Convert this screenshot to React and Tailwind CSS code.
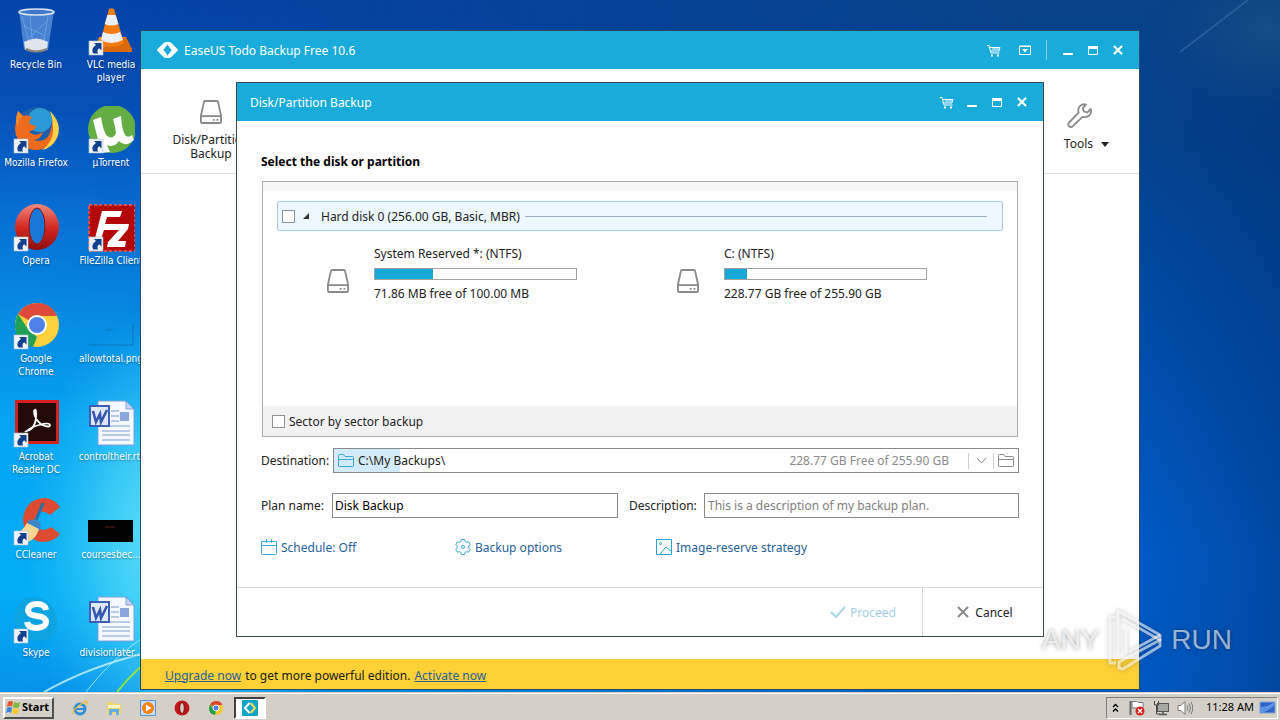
import { useState } from 'react'

const Wallpaper = () => (
  <svg
    className="absolute inset-0 w-full h-full"
    viewBox="0 0 1280 692"
    preserveAspectRatio="none"
    aria-hidden="true"
  >
    <defs>
      <linearGradient id="wallLeft" x1="0.1" y1="0" x2="0" y2="1">
        <stop offset="0" stopColor="#0443a8" />
        <stop offset="0.16" stopColor="#0650b6" />
        <stop offset="0.3" stopColor="#066cd2" />
        <stop offset="0.45" stopColor="#0689e2" />
        <stop offset="0.62" stopColor="#05a4f2" />
        <stop offset="0.85" stopColor="#02aef6" />
        <stop offset="1" stopColor="#0692ea" />
      </linearGradient>
      <linearGradient id="wallRight" x1="0" y1="0" x2="0" y2="1">
        <stop offset="0" stopColor="#084389" />
        <stop offset="0.2" stopColor="#04418c" />
        <stop offset="0.45" stopColor="#004ba6" />
        <stop offset="0.8" stopColor="#005ac6" />
        <stop offset="1" stopColor="#0058c2" />
      </linearGradient>
      <linearGradient id="wallFade" x1="0" y1="0" x2="1" y2="0">
        <stop offset="0.1" stopColor="#fff" stopOpacity="0" />
        <stop offset="0.8" stopColor="#fff" />
      </linearGradient>
      <linearGradient id="wallEdge" x1="0" y1="0" x2="1" y2="0">
        <stop offset="0" stopColor="#003070" stopOpacity="0" />
        <stop offset="1" stopColor="#003070" stopOpacity="0.4" />
      </linearGradient>
      <radialGradient id="wallGlow">
        <stop offset="0" stopColor="#7cecfa" />
        <stop offset="0.5" stopColor="#4fd8f6" stopOpacity="0.7" />
        <stop offset="1" stopColor="#28bef5" stopOpacity="0" />
      </radialGradient>
      <radialGradient id="wallHaze">
        <stop offset="0" stopColor="#1c5488" stopOpacity="0.7" />
        <stop offset="1" stopColor="#1c5488" stopOpacity="0" />
      </radialGradient>
      <mask id="wallMask">
        <rect width="1280" height="692" fill="url(#wallFade)" />
      </mask>
    </defs>
    <rect width="1280" height="692" fill="url(#wallLeft)" />
    <rect width="1280" height="692" fill="url(#wallRight)" mask="url(#wallMask)" />
    <rect x="1140" width="140" height="692" fill="url(#wallEdge)" />
    <ellipse cx="1270" cy="30" rx="110" ry="80" fill="url(#wallHaze)" />
    <ellipse cx="190" cy="540" rx="170" ry="240" fill="url(#wallGlow)" />
    <path d="M44 692Q90 666 150 652" stroke="#c8f4ff" strokeWidth="2" fill="none" opacity="0.8" />
    <path d="M86 692Q110 660 150 632" stroke="#b0f0f8" strokeWidth="1" fill="none" opacity="0.8" />
    <path d="M117 692Q128 678 146 662" stroke="#8ee04a" strokeWidth="2" fill="none" />
    <path d="M1180 52L1248 0" stroke="#5f8fc4" strokeWidth="2" fill="none" opacity="0.3" />
  </svg>
)

const ShortcutArrow = () => (
  <g>
    <rect x="2" y="33" width="14" height="14" fill="#eef2f7" stroke="#b6c2d0" strokeWidth="0.6" />
    <path d="M7 35h7.500v7.500l-2.300-2.300c-1.700 1.300-2.200 2.900-1.200 5.300H6.500c-2-3-1.200-6 2.500-8.500z" fill="#12408c" />
  </g>
)

const RecycleBinIcon = () => (
  <>
    <path d="M7 3L12 42Q24 47 36 42L42 3Z" fill="#5d96dc" opacity="0.75" />
    <path d="M10 8l8 30M18 8l3 32M36 8l-5 30M12 18l20 9M34 14L16 31" stroke="#9cc8f5" strokeWidth="1" opacity="0.4" />
    <path d="M12 34q12-7 24 0l-1 7q-11 6-22 0z" fill="#dfe5ea" />
    <path d="M14 41q10 5 21 0" stroke="#8a8176" strokeWidth="2" fill="none" />
    <ellipse cx="24.5" cy="4" rx="17.5" ry="3" fill="#3f78c8" stroke="#d6e2ee" strokeWidth="1.6" />
  </>
)

const VlcIcon = () => (
  <>
    <path d="M12 29h27l6 15H7z" fill="#f18a14" />
    <path d="M7 44h38v-3L39 29z" fill="#d9690a" />
    <path d="M22 1q2.5-1.500 5 0l10 34q-12 8-24 0z" fill="#f07c12" />
    <path d="M20.400 7h8.300l2.700 9q-6.800 3-13.700 0zM16 24q9 4 17 0l3 8q-12 6-22 0z" fill="#eceff1" />
  </>
)

const FirefoxIcon = () => (
  <>
    <circle cx="25" cy="22" r="21" fill="#1c5fa8" />
    <circle cx="28" cy="14" r="12" fill="#2c9ad6" />
    <path d="M44 13q5 16-5 25-14 11-28 2Q-1 28 5 14L6 5l5 5q6-2 9 2-4 3-2 6l6 2q-1 5-7 5 5 7 14 1-2 7-9 8 14 4 17-11 2-8 1-14z" fill="#ee6a1c" />
    <path d="M38 5q13 13 7 27-5 10-15 12 12-9 11-22 0-9-3-17z" fill="#fbd04a" />
    <path d="M6 5l5 5q-6 5-5 12-4-8 0-17z" fill="#f58a28" />
  </>
)

const UtorrentIcon = () => (
  <>
    <circle cx="25" cy="23" r="24" fill="#64ad43" />
    <path d="M6 14l8-3q2 14 6 19 6 4 9-3-1-8-3-14l8-3q1 16 5 20 3 2 6-1l2 5q-9 8-15 1-5 7-12 4l3 7-8 1Q10 31 6 14z" fill="#fff" />
  </>
)

const OperaIcon = () => (
  <>
    <defs>
      <linearGradient id="operaRed" x1="0" y1="0" x2="0" y2="1">
        <stop offset="0" stopColor="#f08a7c" />
        <stop offset="0.5" stopColor="#d42a22" />
        <stop offset="1" stopColor="#8e0c0c" />
      </linearGradient>
    </defs>
    <ellipse cx="25" cy="23" rx="22" ry="23" fill="url(#operaRed)" />
    <ellipse cx="25" cy="22" rx="8" ry="18" fill="#1878d8" stroke="#8e1414" />
  </>
)

const FilezillaIcon = () => (
  <>
    <rect x="2" y="1" width="46" height="46" fill="#b40808" stroke="#e05050" strokeWidth="2" strokeDasharray="3 2" />
    <path d="M15 7h20l-2 6H20l-2 7h11l-2 6H17l-4 12H7z" fill="#fff" />
    <path d="M25 20h17l-1 5-10 12h8l-1 6H20l1-5 11-12h-8z" fill="#fff" />
  </>
)

const ChromeIcon = () => (
  <>
    <circle cx="25" cy="23" r="22" fill="#fdd13c" />
    <path d="M25 23L6 12Q13 1 25 1q14 0 20 13H25z" fill="#dd4a3a" />
    <path d="M6 12L16 27l9 8-4 10Q3 40 3 23q0-6 3-11z" fill="#20a056" />
    <circle cx="25" cy="23" r="10" fill="#fff" />
    <circle cx="25" cy="23" r="8" fill="#4c82e8" />
  </>
)

const AcrobatIcon = () => (
  <>
    <rect x="3" y="0" width="44" height="44" fill="#d3231c" />
    <rect x="6" y="3" width="38" height="38" fill="#250a0a" />
    <path d="M15 31q10-3 9-19 0-4-2-1 0 8 8 14 8 3 8 0-1-3-11 0-8 2-12 6-3 1 0 0z" stroke="#fff" strokeWidth="1.800" fill="none" />
  </>
)

const CcleanerIcon = () => (
  <>
    <path d="M48 9Q42 0 31 0 13 2 11 21q1 21 19 23 12 0 18-8l-9-7q-8 6-14 0-5-8 1-14 6-4 12 2z" fill="#dc4a30" />
    <path d="M31 5L23 25" stroke="#2870b0" strokeWidth="3" />
    <path d="M16 23q8-4 13 3l-1 7-13-5z" fill="#3c86c8" />
    <path d="M15 25l12 6q-3 10-11 13Q8 44 2 37q8-3 13-12z" fill="#f6d692" />
  </>
)

const SkypeIcon = () => (
  <>
    <path d="M14 2q22-5 30 16 5 26-14 27-24 2-28-19Q2 8 14 2z" fill="#0ea2dc" opacity="0.8" />
    <path d="M34 14q-1-6-9-6t-9 6q0 5 9 6 9 1 9 6t-9 6q-9 0-10-6" stroke="#fff" strokeWidth="6" fill="none" />
  </>
)

const WordIcon = () => (
  <>
    <path d="M11 1h28l8 8v36H11z" fill="#f4f8ff" stroke="#7f9ed8" />
    <path d="M39 1v8h8z" fill="#c4d4f2" stroke="#6a8ac8" strokeWidth="0.7" />
    <path d="M24 11h8M24 16h8M24 21h8M15 26h28M15 31h28M15 35h28M15 40h28" stroke="#7f9ad0" />
    <rect x="33" y="12" width="9" height="9" fill="#8aa6da" />
    <rect x="3" y="6" width="19" height="20" fill="#dfe8fa" stroke="#3c60b8" strokeWidth="2" />
    <path d="M6 11l3 11 4-8 1 8 6-12" stroke="#3458b0" strokeWidth="2.6" fill="none" />
  </>
)

const DarkThumbIcon = () => (
  <>
    <rect x="1" y="22" width="45" height="22" fill="#000" />
    <path d="M18 29h10" stroke="#5c1a1a" />
  </>
)

const ClearThumbIcon = () => (
  <path d="M2 43h44V22M19 28h7" stroke="#0c72bc" strokeWidth="1" fill="none" />
)

const shortcuts = [
  { label: 'Recycle Bin', Icon: RecycleBinIcon },
  { label: 'VLC media player', Icon: VlcIcon, linked: true, wrap: true },
  { label: 'Mozilla Firefox', Icon: FirefoxIcon, linked: true },
  { label: 'µTorrent', Icon: UtorrentIcon, linked: true },
  { label: 'Opera', Icon: OperaIcon, linked: true },
  { label: 'FileZilla Client', Icon: FilezillaIcon, linked: true },
  { label: 'Google Chrome', Icon: ChromeIcon, linked: true, wrap: true },
  { label: 'allowtotal.png', Icon: ClearThumbIcon },
  { label: 'Acrobat Reader DC', Icon: AcrobatIcon, linked: true, wrap: true },
  { label: 'controltheir.rtf', Icon: WordIcon },
  { label: 'CCleaner', Icon: CcleanerIcon, linked: true },
  { label: 'coursesbec...', Icon: DarkThumbIcon },
  { label: 'Skype', Icon: SkypeIcon, linked: true },
  { label: 'divisionlater...', Icon: WordIcon },
]

const DesktopIcons = () => (
  <div className="relative grid w-fit auto-rows-[98px] grid-cols-[72px_78px] font-['DejaVu_Sans_Condensed','DejaVu_Sans',sans-serif]">
    {shortcuts.map(({ label, Icon, linked, wrap }) => (
      <div key={label} className="flex flex-col items-center pt-2">
        <svg width="48" height="48" viewBox="0 0 48 48" fill="none" aria-hidden="true">
          <Icon />
          {linked && <ShortcutArrow />}
        </svg>
        <span
          className={`mt-0.5 text-center text-[10px] leading-[13px] text-white [text-shadow:0_1px_2px_#00204080] ${
            wrap ? 'w-16' : 'whitespace-nowrap'
          }`}
        >
          {label}
        </span>
      </div>
    ))}
  </div>
)

const DiskIcon = () => (
  <svg width="22" height="26" viewBox="0 0 24 28" fill="none" stroke="#8a8a8a" strokeWidth="2" aria-hidden="true">
    <path d="M5.5 2h13q1 0 1.200 1L23 18v6.500q0 1.500-1.500 1.500h-19Q1 26 1 24.500V18L4.300 3q.2-1 1.200-1z" />
    <path d="M1 18.500h22" />
    <path d="M14 22.500h2M18 22.500h2" />
  </svg>
)

const CartIcon = () => (
  <svg width="14" height="13" viewBox="0 0 14 13" fill="none" stroke="#fff" aria-hidden="true">
    <path d="M0 1.500h2l2 7.500h8.500M3 3.500h10L12 7H4M5 5h7" />
    <path d="M4 11.500h2M10 11.500h2" strokeWidth="2" />
  </svg>
)

const DropBoxIcon = () => (
  <svg width="12" height="10" viewBox="0 0 12 10" fill="none" stroke="#fff" aria-hidden="true">
    <path d="M.5 1h11v8.500H.5zM0 1.500h12" />
    <path d="M3 4h6L6 7.500z" fill="#fff" stroke="none" />
  </svg>
)

const MinimizeIcon = () => (
  <svg width="10" height="10" viewBox="0 0 10 10" aria-hidden="true">
    <path d="M0 8h10v2H0z" fill="#fff" />
  </svg>
)

const MaximizeIcon = () => (
  <svg width="10" height="9" viewBox="0 0 10 9" fill="none" stroke="#fff" aria-hidden="true">
    <path d="M.5.5h9v8h-9z" />
    <path d="M0 1.500h10" strokeWidth="3" />
  </svg>
)

const CloseIcon = () => (
  <svg width="10" height="10" viewBox="0 0 10 10" stroke="#fff" strokeWidth="2.2" aria-hidden="true">
    <path d="M1 1l8 8M9 1L1 9" />
  </svg>
)

const WindowButton = ({ label, children }) => (
  <button type="button" aria-label={label} className="flex h-6 w-[25px] items-center justify-center">
    {children}
  </button>
)

const FolderIcon = ({ color }) => (
  <svg width="16" height="13" viewBox="0 0 16 13" fill="none" stroke={color} aria-hidden="true">
    <path d="M.5 12V1.500q0-1 1-1h4l1.500 2h7.500q1 0 1 1V12q0 .5-1 .5h-13q-1 0-1-.5zM.5 5.500h15" />
  </svg>
)

const Partition = ({ name, space, used }) => (
  <div className="flex w-[350px] shrink-0 items-end">
    <div className="pb-2">
      <DiskIcon />
    </div>
    <div className="ml-[25px] flex w-[203px] flex-col">
      <span className="leading-4">{name}</span>
      <div className="my-[6px] h-3 border border-[#a0a0a0] bg-white">
        <div className="h-full bg-[#16a9d8]" style={{ width: `${used}%` }} />
      </div>
      <span className="leading-4 whitespace-nowrap">{space}</span>
    </div>
  </div>
)

const BackupDialog = () => {
  const [destination, setDestination] = useState('C:\\My Backups\\')
  const [planName, setPlanName] = useState('Disk Backup')

  return (
    <section className="absolute inset-x-[95px] top-[51px] bottom-[52px] flex flex-col border border-[#3c4a50] bg-white">
      <header className="flex h-[38px] shrink-0 items-center bg-[#19acda] pl-[13px] pr-[9px] text-white">
        <h2 className="flex-1 pt-0.5">Disk/Partition Backup</h2>
        <WindowButton label="Buy"><CartIcon /></WindowButton>
        <WindowButton label="Minimize"><MinimizeIcon /></WindowButton>
        <WindowButton label="Maximize"><MaximizeIcon /></WindowButton>
        <WindowButton label="Close"><CloseIcon /></WindowButton>
      </header>

      <div className="flex flex-1 flex-col px-6 pt-[33px]">
        <h3 className="leading-4 font-bold text-black">Select the disk or partition</h3>

        <div className="mx-px mt-[11px] flex h-64 flex-col border border-[#adadad]">
          <div className="h-[9px] bg-[#f7f7f7]" />
          <div className="mx-[14px] mt-[10px] flex h-[30px] items-center rounded-[2px] border border-[#a9cde0] bg-[#ecf8fe] pl-1 pr-[15px]">
            <input
              id="disk0"
              type="checkbox"
              className="size-[13px] appearance-none border border-[#8d9499] bg-white checked:bg-[#19acda]"
            />
            <svg className="ml-2" width="7" height="7" viewBox="0 0 7 7" aria-hidden="true">
              <path d="M6 0v6H0z" fill="#333" />
            </svg>
            <label htmlFor="disk0" className="ml-[11px] pt-0.5">Hard disk 0 (256.00 GB, Basic, MBR)</label>
            <div className="ml-[5px] h-px flex-1 bg-[#9aaec4]" />
          </div>
          <div className="mt-[15px] flex pl-16">
            <Partition name="System Reserved *: (NTFS)" space="71.86 MB free of 100.00 MB" used={29} />
            <Partition name="C: (NTFS)" space="228.77 GB free of 255.90 GB" used={11} />
          </div>
          <label className="mt-auto flex h-[30px] items-center gap-1 bg-[#f2f2f2] pl-[9px]">
            <input
              type="checkbox"
              className="size-[13px] appearance-none border border-[#8d9499] bg-white checked:bg-[#19acda]"
            />
            <span className="pt-0.5">Sector by sector backup</span>
          </label>
        </div>

        <div className="mt-[11px] flex items-center">
          <label htmlFor="destination" className="w-[72px]">Destination:</label>
          <div className="flex h-[25px] flex-1 items-center border border-[#8a8a8a] bg-[linear-gradient(90deg,#d3eafa_66px,#fff_66px)] px-1">
            <FolderIcon color="#35a9cf" />
            <input
              id="destination"
              value={destination}
              onChange={(e) => setDestination(e.target.value)}
              className="ml-1 min-w-0 flex-1 outline-none"
            />
            <span className="mr-[19px] text-[#8a8a8a]">228.77 GB Free of 255.90 GB</span>
            <div className="h-4 w-px bg-[#cfcfcf]" />
            <button type="button" aria-label="Recent folders" className="flex w-6 justify-center">
              <svg width="11" height="6" viewBox="0 0 11 6" fill="none" stroke="#8a8a8a" aria-hidden="true">
                <path d="M1 0l4.500 5L10 0" />
              </svg>
            </button>
            <div className="mr-1 h-4 w-px bg-[#cfcfcf]" />
            <button type="button" aria-label="Browse">
              <FolderIcon color="#8a8a8a" />
            </button>
          </div>
        </div>

        <div className="mt-5 flex items-center">
          <label htmlFor="plan" className="w-[71px]">Plan name:</label>
          <input
            id="plan"
            value={planName}
            onChange={(e) => setPlanName(e.target.value)}
            className="h-[25px] w-[286px] border border-[#8a8a8a] px-[2px] text-black outline-none"
          />
          <label htmlFor="description" className="ml-[11px] w-[75px]">Description:</label>
          <input
            id="description"
            placeholder="This is a description of my backup plan."
            className="h-[25px] min-w-0 flex-1 border border-[#8a8a8a] px-[3px] outline-none placeholder:text-[#808080]"
          />
        </div>

        <div className="mt-5 flex text-[#28619c]">
          <button type="button" className="flex w-[194px] items-center gap-1">
            <svg width="16" height="16" viewBox="0 0 16 16" fill="none" stroke="#35a9cf" aria-hidden="true">
              <path d="M.5 2.500h15v12q0 1-1 1h-13q-1 0-1-1zM.5 6.500h15M5.500 0v4M10.500 0v4" />
            </svg>
            <span className="pt-0.5">Schedule: Off</span>
          </button>
          <button type="button" className="flex w-[201px] items-center gap-1">
            <svg width="16" height="16" viewBox="0 0 16 16" fill="none" stroke="#35a9cf" aria-hidden="true">
              <path d="M6.500.5h3l.6 2 1.400.8 2.100-.5L15.200 5.500 13.800 7v2l1.400 1.500-1.600 2.700-2.100-.5-1.400.8-.6 2h-3l-.6-2-1.400-.8-2.100.5L.8 10.500 2.200 9V7L.8 5.500l1.600-2.700 2.100.5 1.400-.8z" />
              <circle cx="8" cy="8" r="1.500" />
            </svg>
            <span className="pt-0.5">Backup options</span>
          </button>
          <button type="button" className="flex items-center gap-1">
            <svg width="16" height="16" viewBox="0 0 16 16" fill="none" stroke="#22a6d0" aria-hidden="true">
              <path d="M.5.5h15v15H.5zM4 15l6-7 5 4" />
              <circle cx="4.500" cy="4.500" r="1" />
            </svg>
            <span className="pt-0.5">Image-reserve strategy</span>
          </button>
        </div>
      </div>

      <footer className="flex h-[49px] shrink-0 items-stretch justify-end border-t border-[#d8d8d8]">
        <button type="button" disabled className="flex items-center gap-1 pr-[26px] text-[#a3cfe3]">
          <svg width="16" height="12" viewBox="0 0 16 12" fill="none" stroke="#a8d6e4" strokeWidth="2" aria-hidden="true">
            <path d="M1 6l5 5 9-10" />
          </svg>
          <span className="pt-0.5">Proceed</span>
        </button>
        <button type="button" className="flex w-[121px] items-center justify-center gap-[6px] border-l border-[#d8d8d8] pl-2 pr-1">
          <svg width="12" height="12" viewBox="0 0 12 12" stroke="#8a8a8a" strokeWidth="2" aria-hidden="true">
            <path d="M1 1l10 10M11 1L1 11" />
          </svg>
          <span className="pt-0.5">Cancel</span>
        </button>
      </footer>
    </section>
  )
}

const MainWindow = () => (
  <main className="absolute left-[140px] right-[140px] top-[30px] bottom-[2px] flex flex-col border border-[#2c4a66] bg-white text-[#222]">
    <header className="flex h-[38px] shrink-0 items-center bg-[#19acda] pl-4 pr-[9px] text-white">
      <svg width="21" height="16" viewBox="0 0 21 16" fill="#fff" aria-hidden="true">
        <path d="M7 .8Q8 0 9.500 0h3L6.800 7.500 12 16H9Q7.500 16 6.500 15L.6 9q-.8-1 0-2z" />
        <path d="M14 15.200q-1 .8-2.500.8h-3l5.700-7.500L9 0h3q1.500 0 2.500 1l5.900 6q.8 1 0 2z" />
        <path d="M10.500 3.500L14.700 8l-4.200 4.500L6.300 8z" fill="#19acda" />
      </svg>
      <h1 className="ml-[6px] flex-1 pt-0.5">EaseUS Todo Backup Free 10.6</h1>
      <WindowButton label="Buy"><CartIcon /></WindowButton>
      <div className="mr-[9px] ml-[6px] flex">
        <WindowButton label="Menu"><DropBoxIcon /></WindowButton>
      </div>
      <div className="mr-2 h-5 w-px bg-[#7fd0ec]" />
      <WindowButton label="Minimize"><MinimizeIcon /></WindowButton>
      <WindowButton label="Maximize"><MaximizeIcon /></WindowButton>
      <WindowButton label="Close"><CloseIcon /></WindowButton>
    </header>

    <nav className="flex h-[105px] shrink-0 items-start justify-between border-b border-[#dedede] px-[30px]">
      <button type="button" className="flex w-20 flex-col items-center pt-[30px] leading-[14px]">
        <DiskIcon />
        <span className="mt-2">Disk/Partition Backup</span>
      </button>
      <button type="button" className="flex flex-col pt-[34px] leading-[14px]">
        <svg className="ml-[3px]" width="26" height="26" viewBox="0 0 26 26" fill="none" stroke="#8a8a8a" strokeWidth="1.800" strokeLinejoin="round" aria-hidden="true">
          <path d="M19 1.500q-4-1-6.500 2-2 3-.8 6.200L2 19.500q-1.500 2 0 3.700 1.900 1.500 3.800 0l9.700-9.400q4 1 6.800-1.300 2.700-3 1.500-6.500l-3.600 3.500-3.400-1-.9-3.300z" />
        </svg>
        <span className="mt-2 flex items-center gap-2">
          Tools
          <svg width="8" height="5" viewBox="0 0 8 5" aria-hidden="true">
            <path d="M0 0h8L4 5z" fill="#222" />
          </svg>
        </span>
      </button>
    </nav>

    <p className="mt-auto flex h-[30px] items-center gap-1 bg-[#fdd036] pl-6 pt-[3px]">
      <a href="#upgrade" className="text-[#28619c] underline">Upgrade now</a>
      to get more powerful edition.
      <a href="#activate" className="text-[#28619c] underline">Activate now</a>
    </p>

    <BackupDialog />
  </main>
)

const Watermark = () => (
  <div className="pointer-events-none absolute right-12 bottom-[20px] flex h-[64px] items-center gap-2 font-['Liberation_Sans_Narrow','Liberation_Sans',sans-serif] text-[28px] text-white/60 [text-shadow:0_0_4px_#00000060]">
    <span>ANY</span>
    <svg width="56" height="62" viewBox="0 0 56 62" fill="none" stroke="#fff" strokeOpacity="0.6" strokeWidth="3" strokeLinejoin="round" className="drop-shadow-[0_0_2px_#00000060]" aria-hidden="true">
      <path d="M9 8H3v46h6" />
      <path d="M11 46V2l42 24v5L16 10" />
      <path d="M22 43l31-17M16 60l37-23v-6L12 53v6z" />
      <path d="M19 20v24" />
    </svg>
    <span>RUN</span>
  </div>
)

const taskbarApps = [
  {
    label: 'Internet Explorer',
    art: (
      <>
        <circle cx="8" cy="9" r="5" stroke="#2f8fdc" strokeWidth="3" fill="none" />
        <path d="M4 9h9" stroke="#2f8fdc" strokeWidth="2" />
        <path d="M1 14Q0 9 14 1q2 1 0 4" stroke="#f0b92c" strokeWidth="1.300" fill="none" />
      </>
    ),
  },
  {
    label: 'Explorer',
    art: (
      <>
        <path d="M1 2h6l1 2h7v10H1z" fill="#f2d66c" />
        <path d="M2 5h12v3H2z" fill="#fff6c8" />
        <path d="M3 15V9h10v6h-3v-3H6v3z" fill="#63b0e4" />
      </>
    ),
  },
  {
    label: 'Media Player',
    art: (
      <>
        <rect x=".5" y=".5" width="15" height="15" fill="#c8def4" stroke="#5f93cc" />
        <circle cx="8" cy="8" r="6" fill="#f4820c" />
        <path d="M6 4.500L11.500 8 6 11.500z" fill="#fff" />
      </>
    ),
  },
  {
    label: 'Opera',
    art: (
      <>
        <circle cx="8" cy="8" r="7.500" fill="#c01818" />
        <ellipse cx="8" cy="8" rx="2.300" ry="5.500" fill="#d4d0c8" stroke="#7c0a0a" />
      </>
    ),
  },
  {
    label: 'Chrome',
    art: (
      <>
        <circle cx="8" cy="8" r="7" fill="#f6c92c" />
        <path d="M8 8L2 4.500Q4 1 8 1q5 0 6.500 4H8z" fill="#dc4434" />
        <path d="M2 4.500L8 11l-1 4Q1 14 1 8z" fill="#20a056" />
        <circle cx="8" cy="8" r="3" fill="#4c82e8" stroke="#fff" />
      </>
    ),
  },
]

const Taskbar = () => (
  <footer className="flex h-7 shrink-0 items-center border-t border-[#d4d0c8] bg-[#d4d0c8] pl-[3px] pr-[2px] pt-[2px] text-[11px] text-black shadow-[inset_0_1px_0_#fff]">
    <button
      type="button"
      className="flex h-[22px] w-[51px] items-center gap-px border-2 border-t-white border-l-white border-r-[#505050] border-b-[#505050] pl-px font-bold"
    >
      <svg width="15" height="15" viewBox="0 0 15 15" className="shrink-0" aria-hidden="true">
        <path d="M2 2q3-2 5 0L6 7Q4 5 1 7z" fill="#e8542c" />
        <path d="M8 2q3 2 6 0l-1 5q-3 2-6 0z" fill="#7cba3c" />
        <path d="M1 8q3-2 5 0l-1 5q-2-2-5 0z" fill="#3c86d8" />
        <path d="M7 8q3 2 6 0l-1 5q-3 2-6 0z" fill="#f8c82c" />
      </svg>
      Start
    </button>
    <div className="ml-[18px] flex flex-1 items-center gap-[18px]">
      {taskbarApps.map(({ label, art }) => (
        <button key={label} type="button" aria-label={label}>
          <svg width="16" height="16" viewBox="0 0 16 16" aria-hidden="true">{art}</svg>
        </button>
      ))}
      <button
        type="button"
        aria-label="EaseUS Todo Backup"
        className="-ml-2 flex h-[22px] w-8 items-center justify-center border-2 border-t-[#404040] border-l-[#404040] border-r-white border-b-white bg-white"
      >
        <svg width="16" height="16" viewBox="0 0 16 16" aria-hidden="true">
          <rect width="16" height="16" rx="1" fill="#12a4c8" />
          <path d="M7.500 3L3 8l4.500 5" stroke="#fff" strokeWidth="2" fill="none" />
          <path d="M8.500 3L13 8l-4.500 5" stroke="#f4d860" strokeWidth="2" fill="none" />
        </svg>
      </button>
    </div>
    <div className="flex h-[22px] items-center border border-t-[#808080] border-l-[#808080] border-r-white border-b-white pl-[5px] pr-px">
      <svg width="7" height="10" viewBox="0 0 7 10" fill="none" stroke="#000" strokeWidth="1.300" aria-hidden="true">
        <path d="M1 4l2.500-2.500L6 4M1 8.500L3.500 6 6 8.500" />
      </svg>
      <svg className="ml-[10px]" width="16" height="16" viewBox="0 0 16 16" aria-hidden="true">
        <path d="M1.500 1v14" stroke="#666" strokeWidth="2" />
        <path d="M3 1.500h5l1 1h5V9H9L8 8H3z" fill="#fff" stroke="#777" />
        <circle cx="11" cy="11" r="4.500" fill="#d42020" />
        <path d="M9 9l4 4M13 9l-4 4" stroke="#fff" strokeWidth="1.300" />
      </svg>
      <svg className="ml-2" width="16" height="16" viewBox="0 0 16 16" fill="none" aria-hidden="true">
        <rect x="4.500" y="3.500" width="11" height="8" fill="#a8a8a0" stroke="#555" />
        <path d="M6 14.500h8M10 12v2" stroke="#555" strokeWidth="1.500" />
        <path d="M1.500 1v4h4V1M3.500 5v9h3" stroke="#444" />
      </svg>
      <svg className="ml-2" width="16" height="16" viewBox="0 0 16 16" fill="none" stroke="#777" aria-hidden="true">
        <path d="M1 5.500h3L8 1.500v13L4 10.500H1z" fill="#fff" />
        <path d="M10 5.500q1.500 2.500 0 5M12 3.500q3 4.500 0 9M14 2q3.500 6 0 12" />
      </svg>
      <time className="ml-[13px] w-[47px] whitespace-nowrap">11:28 AM</time>
      <svg className="ml-[6px]" width="17" height="14" viewBox="0 0 17 14" aria-hidden="true">
        <rect x="1" y="1" width="15" height="11" fill="#2c62c8" stroke="#8aa4cc" />
        <path d="M1 12V6q8 0 14-5h1v3Q8 11 1 12z" fill="#5c92e4" />
      </svg>
    </div>
  </footer>
)

const App = () => (
  <div className="flex h-screen min-h-[600px] flex-col overflow-hidden font-['Noto_Sans','Open_Sans',sans-serif] text-xs text-[#222]">
    <div className="relative min-h-0 flex-1 overflow-hidden bg-[#0650b6]">
      <Wallpaper />
      <DesktopIcons />
      <MainWindow />
      <Watermark />
    </div>
    <Taskbar />
  </div>
)

export default App
